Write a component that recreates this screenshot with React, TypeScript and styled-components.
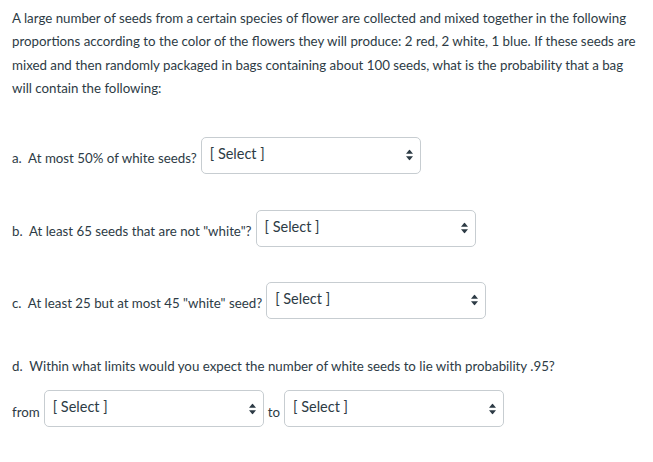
import React from "react";
import styled, { createGlobalStyle } from "styled-components";

const Global = createGlobalStyle`
  html, body { margin: 0; padding: 0; background: #ffffff; }
  body { font-family: Lato, "Open Sans", sans-serif; color: #2d3b45; }
`;

const Page = styled.div`
  padding: 7px 12px 0 12px;
  display: flex;
  flex-direction: column;
  font-size: 13.3px;
  line-height: 23.4px;
`;

const Para = styled.p`
  margin: 0;
  width: 628px;
`;

const Row = styled.div<{ $gap?: number }>`
  display: flex;
  align-items: flex-end;
  gap: 4px;
  margin-top: ${(p) => p.$gap ?? 36}px;
`;

const Label = styled.span`
  white-space: pre;
  padding-bottom: 3px;
`;

const Question = styled.p<{ $gap?: number }>`
  margin: ${(p) => p.$gap ?? 36}px 0 0 0;
  white-space: pre;
`;

const SelectWrap = styled.div`
  position: relative;
  width: 220px;
  height: 37px;
`;

const NativeSelect = styled.select`
  appearance: none;
  -webkit-appearance: none;
  box-sizing: border-box;
  width: 100%;
  height: 100%;
  margin: 0;
  padding: 0 24px 4px 8px;
  border: 1px solid #c7cdd1;
  border-radius: 5px;
  background: #ffffff;
  color: #2d3b45;
  font-family: Lato, "Open Sans", sans-serif;
  font-size: 14.5px;
  outline: none;
`;

const Arrows = styled.svg`
  position: absolute;
  right: 8px;
  top: 50%;
  transform: translateY(-50%);
  pointer-events: none;
`;

function Select() {
  return (
    <SelectWrap>
      <NativeSelect defaultValue="">
        <option value="">[ Select ]</option>
      </NativeSelect>
      <Arrows width="7" height="11" viewBox="0 0 7 11">
        <path d="M3.5 0 L7 4.3 L0 4.3 Z" fill="#2d3b45" />
        <path d="M3.5 11 L7 6.7 L0 6.7 Z" fill="#2d3b45" />
      </Arrows>
    </SelectWrap>
  );
}

export default function App() {
  return (
    <>
      <Global />
      <Page>
        <Para>
          A large number of seeds from a certain species of flower are collected and mixed together in the following
          proportions according to the color of the flowers they will produce: 2 red, 2 white, 1 blue. If these seeds
          are mixed and then randomly packaged in bags containing about 100 seeds, what is the probability that a bag
          will contain the following:
        </Para>
        <Row $gap={36}>
          <Label>{"a.\u00a0 At most 50% of white seeds?"}</Label>
          <Select />
        </Row>
        <Row $gap={36}>
          <Label>{"b.\u00a0 At least 65 seeds that are not \"white\"?"}</Label>
          <Select />
        </Row>
        <Row $gap={35}>
          <Label>{"c.\u00a0 At least 25 but at most 45 \"white\" seed?"}</Label>
          <Select />
        </Row>
        <Question $gap={36}>
          {"d.\u00a0 Within what limits would you expect the number of white seeds to lie with probability .95?"}
        </Question>
        <Row $gap={12}>
          <Label>from</Label>
          <Select />
          <Label>to</Label>
          <Select />
        </Row>
      </Page>
    </>
  );
}
